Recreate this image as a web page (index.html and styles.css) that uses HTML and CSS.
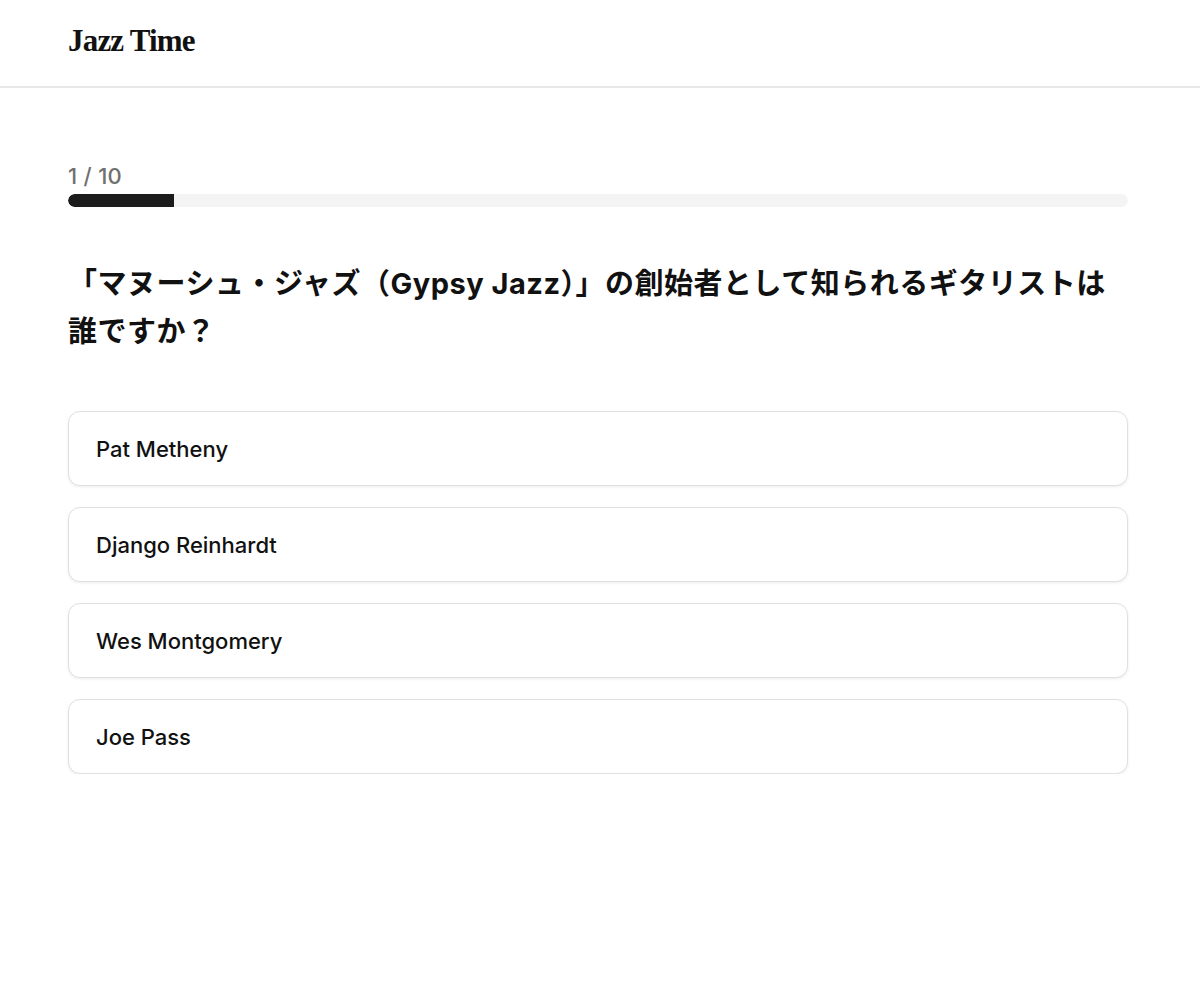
FILE: index.html
```html
<!DOCTYPE html>
<html lang="ja">
<head>
  <meta charset="UTF-8">
  <meta name="viewport" content="width=device-width, initial-scale=1.0">
  <title>Jazz Time</title>
  <link rel="stylesheet" href="styles.css">
</head>
<body>
  <header class="site-header">
    <div class="header-inner">
      <a class="logo" href="#">Jazz Time</a>
    </div>
  </header>

  <main class="quiz">
    <div class="progress-label">1 / 10</div>
    <div class="progress-track">
      <div class="progress-fill" style="width: 10%;"></div>
    </div>

    <h1 class="question">「マヌーシュ・ジャズ（Gypsy Jazz）」の創始者として知られるギタリストは誰ですか？</h1>

    <div class="options">
      <button class="option">Pat Metheny</button>
      <button class="option">Django Reinhardt</button>
      <button class="option">Wes Montgomery</button>
      <button class="option">Joe Pass</button>
    </div>
  </main>
</body>
</html>
```

FILE: styles.css
```css
/* Base */
body {
  margin: 0;
  background: #fff;
  color: #111;
  font-family: Inter, "Noto Sans CJK JP", sans-serif;
}

/* Header */
.site-header {
  height: 86px;
  border-bottom: 2px solid #e8e8e8;
}

.header-inner {
  width: 1060px;
  margin-left: 68px;
  height: 100%;
  display: flex;
  align-items: center;
}

.logo {
  font-family: "Liberation Serif", serif;
  font-weight: bold;
  font-size: 31px;
  letter-spacing: -0.8px;
  color: #111;
  text-decoration: none;
  margin-top: -4px;
}

/* Quiz */
.quiz {
  width: 1060px;
  margin-left: 68px;
  padding-top: 74px;
}

.progress-label {
  font-size: 22px;
  font-weight: 500;
  line-height: 28px;
  letter-spacing: 0.3px;
  color: #707070;
  margin-bottom: 4px;
}

.progress-track {
  height: 13px;
  background: #f4f4f4;
  border-radius: 7px;
  overflow: hidden;
}

.progress-fill {
  height: 100%;
  background: #1c1c1c;
  border-radius: 7px 0 0 7px;
}

.question {
  margin: 53px 0 55px;
  font-family: Inter, "Noto Sans CJK JP", sans-serif;
  font-size: 29px;
  font-weight: bold;
  line-height: 48px;
  letter-spacing: 0.5px;
  color: #111;
}

.options {
  display: flex;
  flex-direction: column;
  gap: 21px;
}

.option {
  display: block;
  width: 100%;
  text-align: left;
  background: #fff;
  border: 1.5px solid #e0e0e0;
  border-radius: 12px;
  box-shadow: 0 1px 3px rgba(0, 0, 0, 0.08);
  padding: 23px 27px 22px;
  font-family: Inter, "Noto Sans CJK JP", sans-serif;
  font-size: 22px;
  font-weight: 500;
  line-height: 28px;
  color: #111;
  cursor: pointer;
}

.option:hover {
  background: #fafafa;
}
```
